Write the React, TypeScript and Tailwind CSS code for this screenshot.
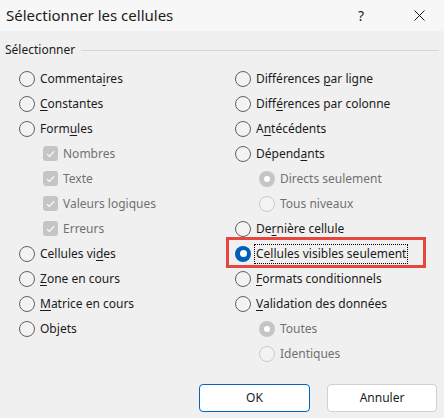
import React from 'react';

type Item = {
  label: string;
  u?: number; // index of underlined char
  kind: 'radio' | 'check' | 'sub';
  checked?: boolean;
  disabled?: boolean;
  focus?: boolean;
};

const LEFT: Item[] = [
  { label: 'Commentaires', u: 8, kind: 'radio' },
  { label: 'Constantes', u: 0, kind: 'radio' },
  { label: 'Formules', u: 4, kind: 'radio' },
  { label: 'Nombres', kind: 'check', checked: true, disabled: true },
  { label: 'Texte', kind: 'check', checked: true, disabled: true },
  { label: 'Valeurs logiques', kind: 'check', checked: true, disabled: true },
  { label: 'Erreurs', kind: 'check', checked: true, disabled: true },
  { label: 'Cellules vides', u: 11, kind: 'radio' },
  { label: 'Zone en cours', u: 0, kind: 'radio' },
  { label: 'Matrice en cours', u: 0, kind: 'radio' },
  { label: 'Objets', u: 2, kind: 'radio' },
];

const RIGHT: Item[] = [
  { label: 'Différences par ligne', u: 12, kind: 'radio' },
  { label: 'Différences par colonne', u: 4, kind: 'radio' },
  { label: 'Antécédents', u: 1, kind: 'radio' },
  { label: 'Dépendants', u: 6, kind: 'radio' },
  { label: 'Directs seulement', kind: 'sub', checked: true, disabled: true },
  { label: 'Tous niveaux', kind: 'sub', disabled: true },
  { label: 'Dernière cellule', u: 2, kind: 'radio' },
  { label: 'Cellules visibles seulement', u: 2, kind: 'radio', checked: true, focus: true },
  { label: 'Formats conditionnels', u: 0, kind: 'radio' },
  { label: 'Validation des données', u: 0, kind: 'radio' },
  { label: 'Toutes', kind: 'sub', checked: true, disabled: true },
  { label: 'Identiques', kind: 'sub', disabled: true },
];

function Label({ item }: { item: Item }) {
  const { label, u } = item;
  if (u === undefined) return <>{label}</>;
  return (
    <>
      {label.slice(0, u)}
      <span className="underline underline-offset-[2px]">{label[u]}</span>
      {label.slice(u + 1)}
    </>
  );
}

function RadioDot({ item }: { item: Item }) {
  if (item.disabled) {
    return item.checked ? (
      <span className="w-4 h-4 rounded-full bg-[#c5c5c5] flex items-center justify-center shrink-0">
        <span className="w-[6px] h-[6px] rounded-full bg-white" />
      </span>
    ) : (
      <span className="w-4 h-4 rounded-full border border-[#cacaca] bg-[#f3f3f3] shrink-0" />
    );
  }
  return item.checked ? (
    <span className="w-4 h-4 rounded-full bg-[#005fb8] flex items-center justify-center shrink-0">
      <span className="w-[7px] h-[7px] rounded-full bg-white" />
    </span>
  ) : (
    <span className="w-4 h-4 rounded-full border border-[#616161] bg-[#f3f3f3] shrink-0" />
  );
}

function CheckBox() {
  return (
    <span className="w-[15px] h-[15px] rounded-[3px] bg-[#c5c5c5] flex items-center justify-center shrink-0">
      <svg width="9" height="8" viewBox="0 0 9 8" fill="none">
        <path d="M1 4.2 L3.4 6.4 L8 1.4" stroke="#fff" strokeWidth="1.1" />
      </svg>
    </span>
  );
}

function Row({ item }: { item: Item }) {
  const indent = item.kind === 'radio' ? '' : 'ml-[24px]';
  const color = item.disabled ? 'text-[#707070]' : 'text-[#1b1b1b]';
  return (
    <div className={`relative h-[25px] flex items-center ${indent}`}>
      {item.kind === 'check' ? <CheckBox /> : <RadioDot item={item} />}
      <span
        className={`ml-[4px] px-[1px] leading-[18px] whitespace-nowrap ${color} ${
          item.focus ? 'outline outline-1 outline-dotted outline-black' : ''
        }`}
      >
        <Label item={item} />
      </span>
      {item.focus && (
        <div className="absolute left-[-9px] top-[-4px] w-[200px] h-[31px] border-[3px] border-[#e8453f]" />
      )}
    </div>
  );
}

export default function App() {
  return (
    <div
      className="w-[444px] h-[418px] bg-[#f0f0f0] flex flex-col text-[12px]"
      style={{ fontFamily: '"Noto Sans", "Segoe UI", sans-serif' }}
    >
      <div className="h-[31px] bg-[#f7f7f7] flex items-center pl-[6px] shrink-0">
        <span className="text-[15px] text-[#1b1b1b] leading-none">Sélectionner les cellules</span>
        <span className="ml-auto text-[14px] text-[#1b1b1b] mr-[50px]">?</span>
        <svg width="11" height="11" viewBox="0 0 11 11" className="mr-[19px]">
          <path d="M0.5 0.5 L10.5 10.5 M10.5 0.5 L0.5 10.5" stroke="#1b1b1b" strokeWidth="1" />
        </svg>
      </div>

      <div className="mt-[9px] h-[20px] flex items-center pl-[5px] pr-[5px]">
        <span className="text-[#1b1b1b]">Sélectionner</span>
        <div className="flex-1 h-px bg-[#d6d6d6] ml-[6px]" />
      </div>

      <div className="mt-[6px] flex">
        <div className="w-[235px] pl-[19px]">
          {LEFT.map((it) => (
            <Row key={it.label} item={it} />
          ))}
        </div>
        <div className="flex-1">
          {RIGHT.map((it) => (
            <Row key={it.label} item={it} />
          ))}
        </div>
      </div>

      <div className="mt-auto mb-[6px] flex justify-end gap-[17px] pr-[7px]">
        <button className="w-[111px] h-[28px] rounded-[4px] bg-white border border-[#0067c0] text-[#1b1b1b]">
          OK
        </button>
        <button className="w-[110px] h-[28px] rounded-[4px] bg-white border border-[#d0d0d0] text-[#1b1b1b]">
          Annuler
        </button>
      </div>
    </div>
  );
}
